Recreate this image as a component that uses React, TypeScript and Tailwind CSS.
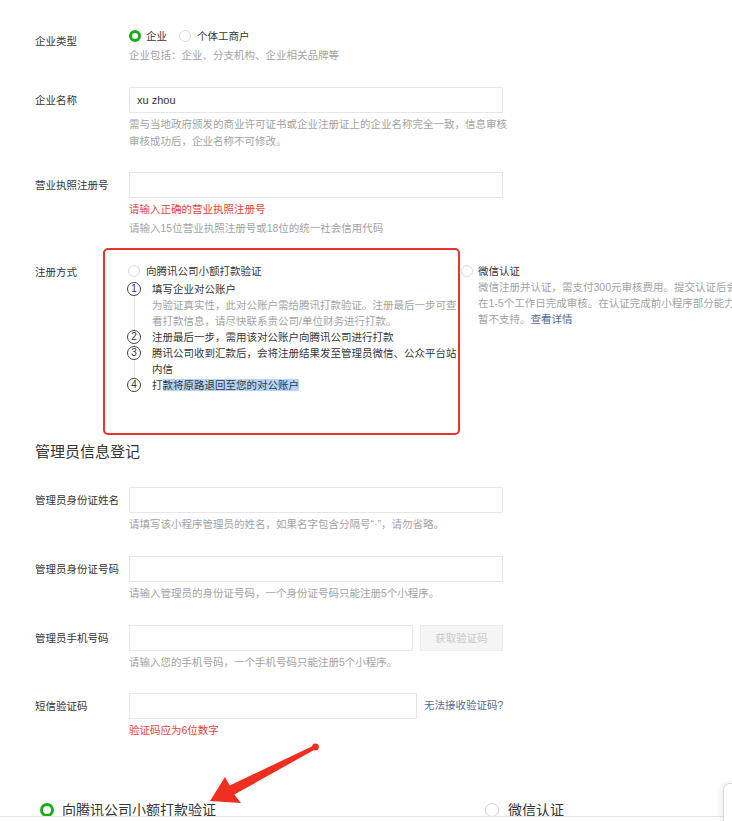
import React from "react";

function GreenRadio() {
  return <span className="inline-block w-[12px] h-[12px] rounded-full border-[3px] border-[#1aad19] bg-white shrink-0" />;
}
function GrayRadio() {
  return <span className="inline-block w-[12px] h-[12px] rounded-full border border-[#dcdcdc] bg-white shrink-0" />;
}

function Label({ children }: { children: React.ReactNode }) {
  return <div className="w-[94px] shrink-0 leading-[26px] text-[10.5px] text-[#353535]">{children}</div>;
}

function Input({ value, w }: { value?: string; w: string }) {
  return (
    <div className={`h-[26px] border border-[#e7e7eb] bg-white px-[7px] leading-[24px] text-[11px] text-[#353535] ${w}`}>
      {value}
    </div>
  );
}

function Step({ n, children }: { n: string; children: React.ReactNode }) {
  return (
    <div className="flex">
      <span className="relative z-10 mt-[1px] w-[14px] h-[14px] rounded-full border border-[#444] bg-white shrink-0 flex items-center justify-center text-[10px] leading-none text-[#353535]">
        {n}
      </span>
      <div className="ml-[11px] leading-[16px]">{children}</div>
    </div>
  );
}

export default function App() {
  return (
    <div className="relative w-[732px] h-[821px] overflow-hidden bg-white text-[10.5px] text-[#353535] [font-family:'Liberation_Sans','Noto_Sans_CJK_SC',sans-serif]">
      <div className="pt-[28px] pl-[35px]">
        {/* 企业类型 */}
        <div className="flex">
          <Label>企业类型</Label>
          <div>
            <div className="flex items-center h-[16px] leading-[16px]">
              <GreenRadio />
              <span className="ml-[5px]">企业</span>
              <span className="ml-[12px] flex"><GrayRadio /></span>
              <span className="ml-[6px]">个体工商户</span>
            </div>
            <div className="mt-[3px] leading-[16px] text-[#a3a3a3]">企业包括：企业、分支机构、企业相关品牌等</div>
          </div>
        </div>

        {/* 企业名称 */}
        <div className="flex mt-[24px]">
          <Label>企业名称</Label>
          <div>
            <Input value="xu zhou" w="w-[374px]" />
            <div className="mt-[3px] leading-[17px] text-[#a3a3a3] whitespace-nowrap">
              需与当地政府颁发的商业许可证书或企业注册证上的企业名称完全一致，信息审核
              <br />
              审核成功后，企业名称不可修改。
            </div>
          </div>
        </div>

        {/* 营业执照注册号 */}
        <div className="flex mt-[22px]">
          <Label>营业执照注册号</Label>
          <div>
            <Input w="w-[374px]" />
            <div className="mt-[2px] leading-[19px] text-[#e64340]">请输入正确的营业执照注册号</div>
            <div className="leading-[19px] text-[#a3a3a3]">请输入15位营业执照注册号或18位的统一社会信用代码</div>
          </div>
        </div>

        {/* 注册方式 */}
        <div className="flex mt-[25px]">
          <div className="w-[93px] shrink-0 pt-[1px] leading-[16px]">注册方式</div>
          <div className="w-[333px] shrink-0">
            <div className="flex items-center h-[16px] leading-[16px]">
              <GrayRadio />
              <span className="ml-[6px]">向腾讯公司小额打款验证</span>
            </div>
            <div className="relative -ml-px mt-[2px] whitespace-nowrap">
              <span className="absolute left-[6.5px] top-[10px] bottom-[10px] w-px bg-[#e3e3e3]" />
              <Step n="1">
                填写企业对公账户
                <div className="text-[#a3a3a3]">
                  为验证真实性，此对公账户需给腾讯打款验证。注册最后一步可查
                  <br />
                  看打款信息，请尽快联系贵公司/单位财务进行打款。
                </div>
              </Step>
              <Step n="2">注册最后一步，需用该对公账户向腾讯公司进行打款</Step>
              <Step n="3">
                腾讯公司收到汇款后，会将注册结果发至管理员微信、公众平台站
                <br />
                内信
              </Step>
              <Step n="4">
                打<span className="bg-[#b4d5fe]">款将原路退回至您的对公账户</span>
              </Step>
            </div>
          </div>
          <div className="whitespace-nowrap">
            <div className="flex items-center h-[16px] leading-[16px]">
              <GrayRadio />
              <span className="ml-[5px]">微信认证</span>
            </div>
            <div className="ml-[17px] leading-[16px] text-[#a3a3a3]">
              微信注册并认证，需支付300元审核费用。提交认证后会
              <br />
              在1-5个工作日完成审核。在认证完成前小程序部分能力
              <br />
              暂不支持。<span className="text-[#576b95]">查看详情</span>
            </div>
          </div>
        </div>

        {/* heading */}
        <div className="mt-[49px] text-[15px] leading-[20px] text-[#353535]">管理员信息登记</div>

        <div className="flex mt-[25px]">
          <Label>管理员身份证姓名</Label>
          <div>
            <Input w="w-[374px]" />
            <div className="mt-[3px] leading-[17px] text-[#a3a3a3]">请填写该小程序管理员的姓名，如果名字包含分隔号“·”，请勿省略。</div>
          </div>
        </div>

        <div className="flex mt-[23px]">
          <Label>管理员身份证号码</Label>
          <div>
            <Input w="w-[374px]" />
            <div className="mt-[3px] leading-[17px] text-[#a3a3a3]">请输入管理员的身份证号码，一个身份证号码只能注册5个小程序。</div>
          </div>
        </div>

        <div className="flex mt-[23px]">
          <Label>管理员手机号码</Label>
          <div>
            <div className="flex">
              <Input w="w-[284px]" />
              <div className="ml-[7px] w-[83px] h-[26px] border border-[#ececec] bg-[#f5f5f5] text-center leading-[24px] text-[#c9c9c9]">获取验证码</div>
            </div>
            <div className="mt-[3px] leading-[17px] text-[#a3a3a3]">请输入您的手机号码，一个手机号码只能注册5个小程序。</div>
          </div>
        </div>

        <div className="flex mt-[22px]">
          <Label>短信验证码</Label>
          <div>
            <div className="flex items-center">
              <Input w="w-[288px]" />
              <span className="ml-[7px] text-[#576b95]">无法接收验证码?</span>
            </div>
            <div className="mt-[2px] leading-[19px] text-[#e64340]">验证码应为6位数字</div>
          </div>
        </div>
      </div>

      {/* bottom strip */}
      <div className="mt-[59px] h-[18px] overflow-hidden border-b border-[#e6e6e6] flex items-start text-[14px] leading-[22px] text-[#353535]">
        <div className="w-[485px] shrink-0 flex items-center pl-[40px]">
          <span className="inline-block w-[14px] h-[14px] rounded-full border-[3px] border-[#1aad19] bg-white shrink-0" />
          <span className="ml-[8px]">向腾讯公司小额打款验证</span>
        </div>
        <div className="flex items-center">
          <span className="inline-block w-[14px] h-[14px] rounded-full border border-[#d5d5d5] bg-white shrink-0" />
          <span className="ml-[9px]">微信认证</span>
        </div>
      </div>

      {/* annotation: red box */}
      <div className="absolute left-[103px] top-[248px] w-[357px] h-[187px] border-2 border-[#e5362c] rounded-[5px] pointer-events-none" />

      {/* annotation: red arrow */}
      <svg className="absolute left-0 top-0 pointer-events-none" width="732" height="821" viewBox="0 0 732 821">
        <path d="M 317 744 L 229.7 785.5 L 225 777 L 210 801 L 241 803 L 234.3 794.5 L 314 750 Z" fill="#ee2e1f" />
        <circle cx="315.5" cy="747" r="3.4" fill="#ee2e1f" />
      </svg>

      {/* partial card at right edge */}
      <div className="absolute left-[723px] top-[783px] w-[30px] h-[60px] rounded-tl-[7px] border border-[#dadada] bg-white shadow-[-2px_0_6px_rgba(0,0,0,0.08)]" />
    </div>
  );
}
